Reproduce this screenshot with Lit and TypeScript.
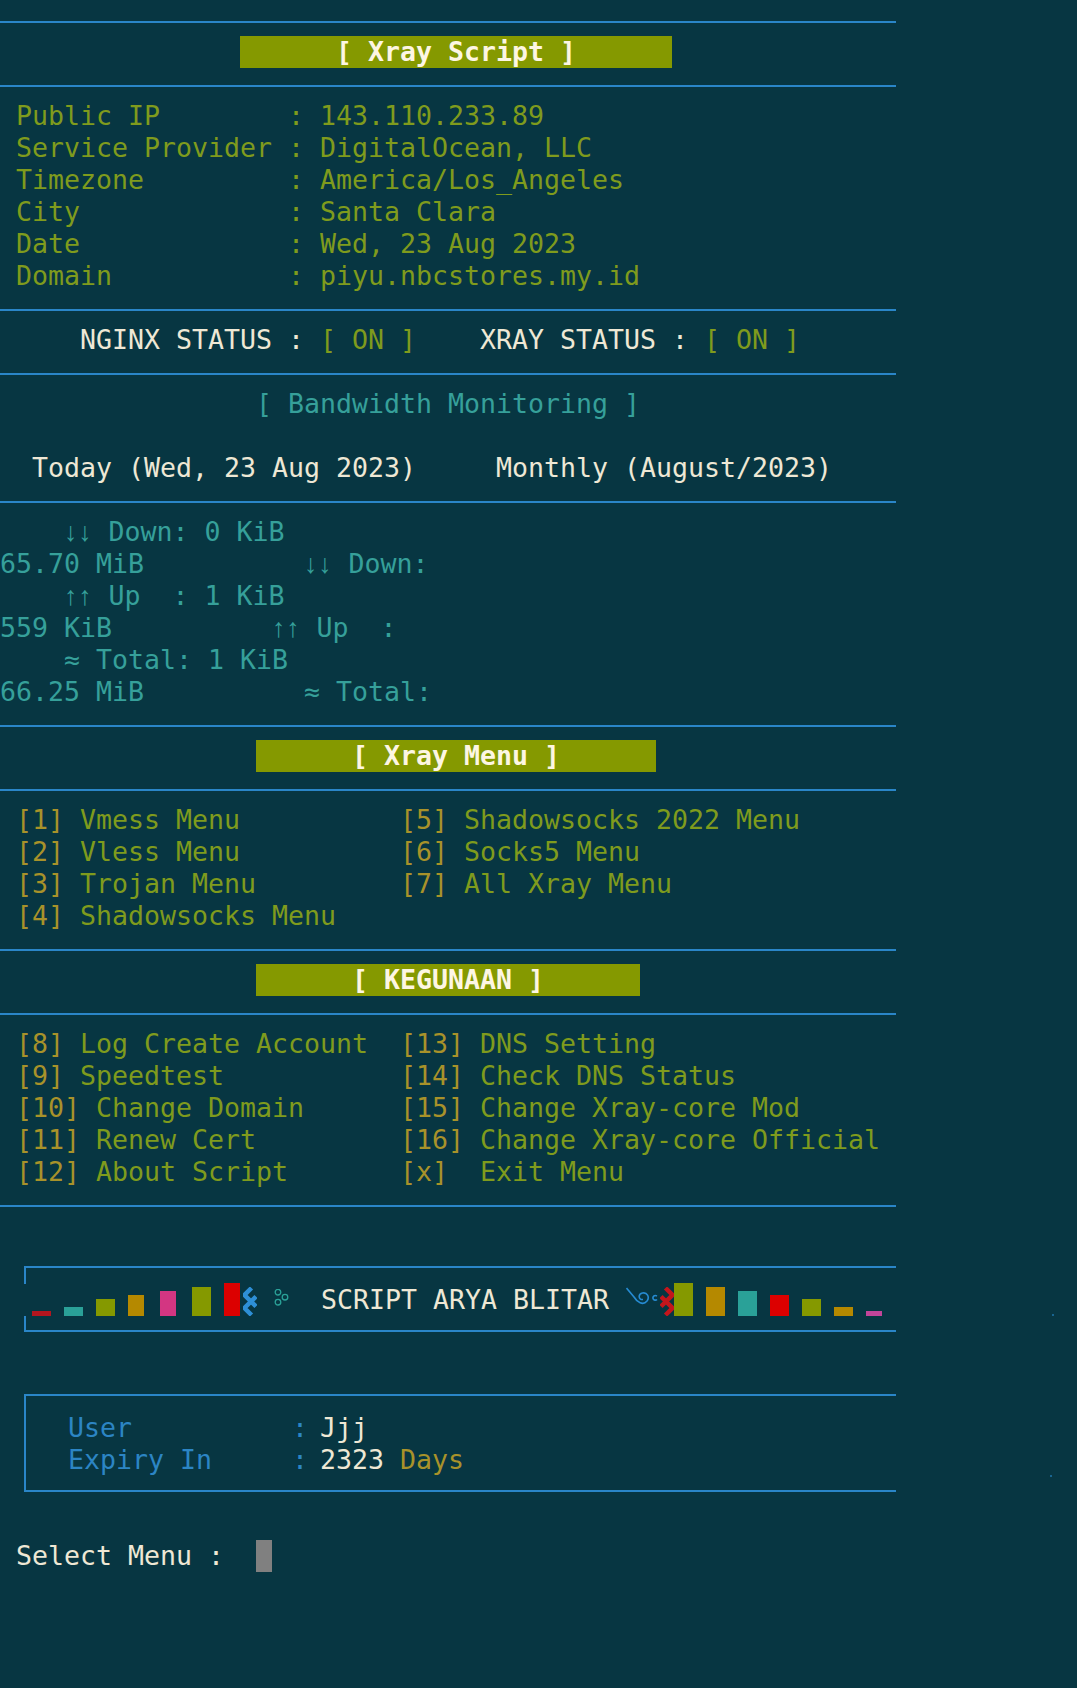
import { LitElement, html, css, svg } from "lit";
import { customElement } from "lit/decorators.js";

const info = [
  ["Public IP        ", "143.110.233.89"],
  ["Service Provider ", "DigitalOcean, LLC"],
  ["Timezone         ", "America/Los_Angeles"],
  ["City             ", "Santa Clara"],
  ["Date             ", "Wed, 23 Aug 2023"],
  ["Domain           ", "piyu.nbcstores.my.id"],
];

const xrayMenu = [
  ["[1]", " Vmess Menu          ", "[5]", " Shadowsocks 2022 Menu"],
  ["[2]", " Vless Menu          ", "[6]", " Socks5 Menu"],
  ["[3]", " Trojan Menu         ", "[7]", " All Xray Menu"],
  ["[4]", " Shadowsocks Menu", "", ""],
];

const toolMenu = [
  ["[8]", " Log Create Account  ", "[13]", " DNS Setting"],
  ["[9]", " Speedtest           ", "[14]", " Check DNS Status"],
  ["[10]", " Change Domain      ", "[15]", " Change Xray-core Mod"],
  ["[11]", " Renew Cert         ", "[16]", " Change Xray-core Official"],
  ["[12]", " About Script       ", "[x]", "  Exit Menu"],
];

const leftBars = [
  { w: 19, h: 5, c: "#b3161f" },
  { w: 19, h: 9, c: "#2aa198" },
  { w: 19, h: 17, c: "#859900" },
  { w: 16, h: 21, c: "#b58900" },
  { w: 16, h: 25, c: "#d33682" },
  { w: 19, h: 29, c: "#859900" },
  { w: 16, h: 33, c: "#dc0000" },
];

const rightBars = [
  { w: 19, h: 33, c: "#859900" },
  { w: 19, h: 29, c: "#b58900" },
  { w: 19, h: 25, c: "#2aa198" },
  { w: 19, h: 21, c: "#dc0000" },
  { w: 19, h: 17, c: "#859900" },
  { w: 19, h: 9, c: "#b58900" },
  { w: 16, h: 5, c: "#c2459a" },
];

@customElement("app-root")
export class AppRoot extends LitElement {
  static styles = css`
    :host {
      display: block;
      min-height: 1688px;
      background: #073642;
      font-family: "DejaVu Sans Mono", "Liberation Mono", monospace;
      font-size: 26.58px;
      color: #7f9b1d;
      overflow: hidden;
    }
    .term {
      padding-top: 4px;
      width: 1077px;
    }
    .row {
      height: 32px;
      line-height: 32px;
      white-space: pre;
    }
    .rule {
      height: 32px;
      padding-top: 17px;
      box-sizing: border-box;
    }
    .rule i {
      display: block;
      width: 896px;
      height: 2px;
      background: #2a86c8;
    }
    .title {
      display: inline-block;
      height: 32px;
      background: #859900;
      color: #fdf6e3;
      font-weight: bold;
    }
    .white {
      color: #eee8d5;
    }
    .cyan {
      color: #36a09a;
    }
    .blue {
      color: #2c85c4;
    }
    .yellow {
      color: #a8922a;
    }
    .olive {
      color: #7f9b1d;
    }
    .arrow {
      font-family: "Liberation Sans", sans-serif;
      letter-spacing: 1px;
    }
    .head {
      height: 32px;
      padding-top: 14px;
      box-sizing: border-box;
    }
    .head i {
      display: block;
      box-sizing: border-box;
      margin-left: 24px;
      width: 872px;
      height: 18px;
      border-top: 2px solid #2a86c8;
      border-left: 2px solid #2a86c8;
    }
    .foot {
      height: 32px;
    }
    .foot i {
      display: block;
      box-sizing: border-box;
      margin-left: 24px;
      width: 872px;
      height: 16px;
      border-bottom: 2px solid #2a86c8;
      border-left: 2px solid #2a86c8;
    }
    .banner {
      display: flex;
      align-items: flex-end;
      height: 32px;
      padding-left: 32px;
    }
    .bar {
      flex: none;
    }
    .glyph {
      flex: none;
      display: block;
      align-self: flex-start;
    }
    .g-blue {
      margin: 3px 0 0 3px;
    }
    .g-rings {
      margin: 5px 0 0 17px;
    }
    .banner-text {
      flex: none;
      align-self: flex-start;
      height: 32px;
      line-height: 32px;
      white-space: pre;
      margin-left: 32px;
      color: #eee8d5;
    }
    .g-swirl {
      margin: 3px 0 0 17px;
    }
    .g-red {
      margin: 3px 0 0 2px;
      transform: scaleX(-1);
    }
    .dot {
      flex: none;
      width: 2px;
      height: 2px;
      background: #268bd2;
      opacity: 0.55;
    }
    .dot-a {
      margin: 0 0 0 170px;
    }
    .userwrap {
      display: flex;
      align-items: flex-start;
      margin-top: 14px;
    }
    .userbox {
      box-sizing: border-box;
      margin-left: 24px;
      width: 872px;
      height: 98px;
      padding: 16px 0 0 42px;
      border: 2px solid #2a86c8;
      border-width: 2px 0 2px 2px;
      flex: none;
    }
    .val {
      margin-left: -4px;
    }
    .dot-b {
      margin: 81px 0 0 154px;
    }
    .after-box {
      height: 48px;
    }
    .cursor {
      display: inline-block;
      width: 16px;
      height: 32px;
      background: #808080;
      vertical-align: top;
    }
  `;

  private rule() {
    return html`<div class="rule"><i></i></div>`;
  }

  private menu(rows: string[][]) {
    return rows.map(
      (r) => html`<div class="row"> <span class="yellow">${r[0]}</span>${r[1]}${r[0].length === 3 && r[1].length < 21
        ? " ".repeat(21 - r[1].length)
        : ""}<span class="yellow">${r[2]}</span>${r[3]}</div>`
    );
  }

  private bars(list: { w: number; h: number; c: string }[]) {
    return list.map(
      (b, i) =>
        html`<div
          class="bar"
          style="width:${b.w}px;height:${b.h}px;background:${b.c};margin-right:${i === list.length - 1 ? 0 : 32 - b.w}px"
        ></div>`
    );
  }

  render() {
    const zig = svg`<polyline points="8.5,1 1.5,8 13,19.5" /><polyline points="13,9.5 1.5,21 8.5,28" />`;
    return html`<div class="term">
      ${this.rule()}
      <div class="row">${"               "}<span class="title">${"      [ Xray Script ]      "}</span></div>
      ${this.rule()}
      ${info.map(([k, v]) => html`<div class="row"> ${k}: ${v}</div>`)}
      ${this.rule()}
      <div class="row white">${"     NGINX STATUS : "}<span class="olive">[ ON ]</span>${"    XRAY STATUS : "}<span class="olive">[ ON ]</span></div>
      ${this.rule()}
      <div class="row cyan">${"                [ Bandwidth Monitoring ]"}</div>
      <div class="row"></div>
      <div class="row white">${"  Today (Wed, 23 Aug 2023)     Monthly (August/2023)"}</div>
      ${this.rule()}
      <div class="row cyan">${"    "}<span class="arrow">↓↓</span> Down: 0 KiB</div>
      <div class="row cyan">${"65.70 MiB          "}<span class="arrow">↓↓</span> Down:</div>
      <div class="row cyan">${"    "}<span class="arrow">↑↑</span> Up  : 1 KiB</div>
      <div class="row cyan">${"559 KiB          "}<span class="arrow">↑↑</span> Up  :</div>
      <div class="row cyan">${"    ≈ Total: 1 KiB"}</div>
      <div class="row cyan">${"66.25 MiB          ≈ Total:"}</div>
      ${this.rule()}
      <div class="row">${"                "}<span class="title">${"      [ Xray Menu ]      "}</span></div>
      ${this.rule()}
      ${this.menu(xrayMenu)}
      ${this.rule()}
      <div class="row">${"                "}<span class="title">${"      [ KEGUNAAN ]      "}</span></div>
      ${this.rule()}
      ${this.menu(toolMenu)}
      ${this.rule()}
      <div class="row"></div>
      <div class="head"><i></i></div>
      <div class="banner">
        ${this.bars(leftBars)}
        <svg class="glyph g-blue" width="14" height="29" viewBox="0 0 14 29" fill="none" stroke="#2e8fd6" stroke-width="4.5">${zig}</svg>
        <svg class="glyph g-rings" width="15" height="17" viewBox="0 0 15 17" fill="none" stroke="#2aa198" stroke-width="1.3">
          <circle cx="4" cy="3.2" r="2.8" /><circle cx="11" cy="8.2" r="2.8" /><circle cx="4" cy="13.2" r="2.8" />
        </svg>
        <div class="banner-text">SCRIPT ARYA BLITAR</div>
        <svg class="glyph g-swirl" width="32" height="20" viewBox="0 0 32 20" fill="none" stroke="#268bd2" stroke-width="1.6">
          <path d="M0.5 1 L8 10 C11 15 17 19 21 14 C24 10 21 5 16.5 6 C12 7 12 13 17 12.5" />
          <path d="M31 9 C28 7.5 26.5 10 27 11.5 C27.5 13.5 30 13.5 31 12.5" />
        </svg>
        <svg class="glyph g-red" width="14" height="29" viewBox="0 0 14 29" fill="none" stroke="#c4161c" stroke-width="4.5">${zig}</svg>
        ${this.bars(rightBars)}
        <div class="dot dot-a"></div>
      </div>
      <div class="foot"><i></i></div>
      <div class="row"></div>
      <div class="userwrap">
        <div class="userbox">
          <div class="row blue">User          : <span class="val white">Jjj</span></div>
          <div class="row blue">Expiry In     : <span class="val"><span class="white">2323</span> <span class="yellow">Days</span></span></div>
        </div>
        <div class="dot dot-b"></div>
      </div>
      <div class="after-box"></div>
      <div class="row white"> Select Menu :  <span class="cursor"></span></div>
    </div>`;
  }
}
